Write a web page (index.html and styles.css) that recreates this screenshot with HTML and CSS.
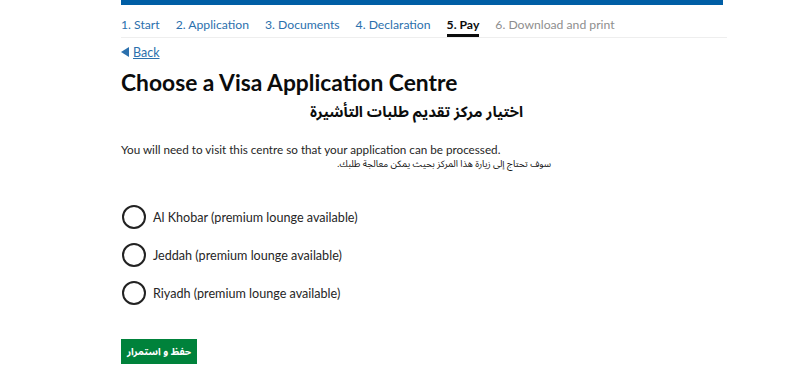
FILE: index.html
```html
<!DOCTYPE html>
<html lang="en">
<head>
<meta charset="utf-8">
<link rel="stylesheet" href="styles.css">
</head>
<body>
<div class="page">
  <div class="topbar"></div>
  <nav class="steps">
    <a class="step">1. Start</a>
    <a class="step">2. Application</a>
    <a class="step">3. Documents</a>
    <a class="step">4. Declaration</a>
    <span class="step current">5. Pay</span>
    <span class="step disabled">6. Download and print</span>
  </nav>
  <a class="back"><span class="tri"></span><span class="back-text">Back</span></a>
  <h1 class="title">Choose a Visa Application Centre</h1>
  <div class="title-ar" dir="rtl" lang="ar">اختيار مركز تقديم طلبات التأشيرة</div>
  <p class="lead">You will need to visit this centre so that your application can be processed.</p>
  <div class="lead-ar" dir="rtl" lang="ar">سوف تحتاج إلى زيارة هذا المركز بحيث يمكن معالجة طلبك.</div>
  <div class="options">
    <label class="option"><span class="radio"></span><span class="opt-text">Al Khobar (premium lounge available)</span></label>
    <label class="option"><span class="radio"></span><span class="opt-text">Jeddah (premium lounge available)</span></label>
    <label class="option"><span class="radio"></span><span class="opt-text">Riyadh (premium lounge available)</span></label>
  </div>
  <button class="btn" dir="rtl" lang="ar">حفظ و استمرار</button>
</div>
</body>
</html>
```
FILE: styles.css
```css
html, body { margin: 0; padding: 0; background: #fff; }
body { font-family: Lato, "Liberation Sans", Arial, sans-serif; color: #0b0c0c; }
.page { margin-left: 121px; width: 606px; }
.topbar { height: 5px; background: #005ea5; width: 602px; }
.steps { display: flex; gap: 16px; border-bottom: 1px solid #eeeeee; height: 33px; box-sizing: border-box; padding-top: 12px; font-size: 12.2px; }
.step { color: #2b70ad; text-decoration: none; line-height: 15px; height: 20px; box-sizing: border-box; }
.step.current { color: #0b0c0c; font-weight: bold; border-bottom: 3px solid #0b0c0c; }
.step.disabled { color: #8e8e8e; }
.back { display: flex; align-items: center; gap: 4px; margin-top: 6px; font-size: 12.5px; color: #2b70ad; height: 16px; }
.tri { width: 0; height: 0; border-top: 5px solid transparent; border-bottom: 5px solid transparent; border-right: 8px solid #2b70ad; }
.back-text { text-decoration: underline; }
.title { margin: 9px 0 0; font-size: 22.8px; font-weight: bold; line-height: 26px; }
.title-ar { width: 402px; text-align: right; font-family: "Noto Sans Arabic", "DejaVu Sans", sans-serif; font-weight: bold; font-size: 15px; line-height: 28px; margin-top: 3px; }
.lead { margin: 17px 0 0; font-size: 11.7px; line-height: 13px; color: #262626; }
.lead-ar { width: 430px; text-align: right; font-family: "Noto Sans Arabic", "DejaVu Sans", sans-serif; font-size: 9.3px; line-height: 13px; margin-top: 2px; color: #111; }
.options { display: flex; flex-direction: column; gap: 14px; margin-top: 34px; }
.option { display: flex; align-items: center; gap: 7px; height: 24px; font-size: 12.6px; color: #262626; }
.radio { width: 24px; height: 24px; box-sizing: border-box; border: 2px solid #222; border-radius: 50%; margin-left: 1px; }
.btn { display: block; margin-top: 34px; width: 76px; height: 25px; border: 0; background: #00823b; color: #fff; font-family: "Noto Sans Arabic", "DejaVu Sans", sans-serif; font-weight: bold; font-size: 10px; padding: 0; }
```
